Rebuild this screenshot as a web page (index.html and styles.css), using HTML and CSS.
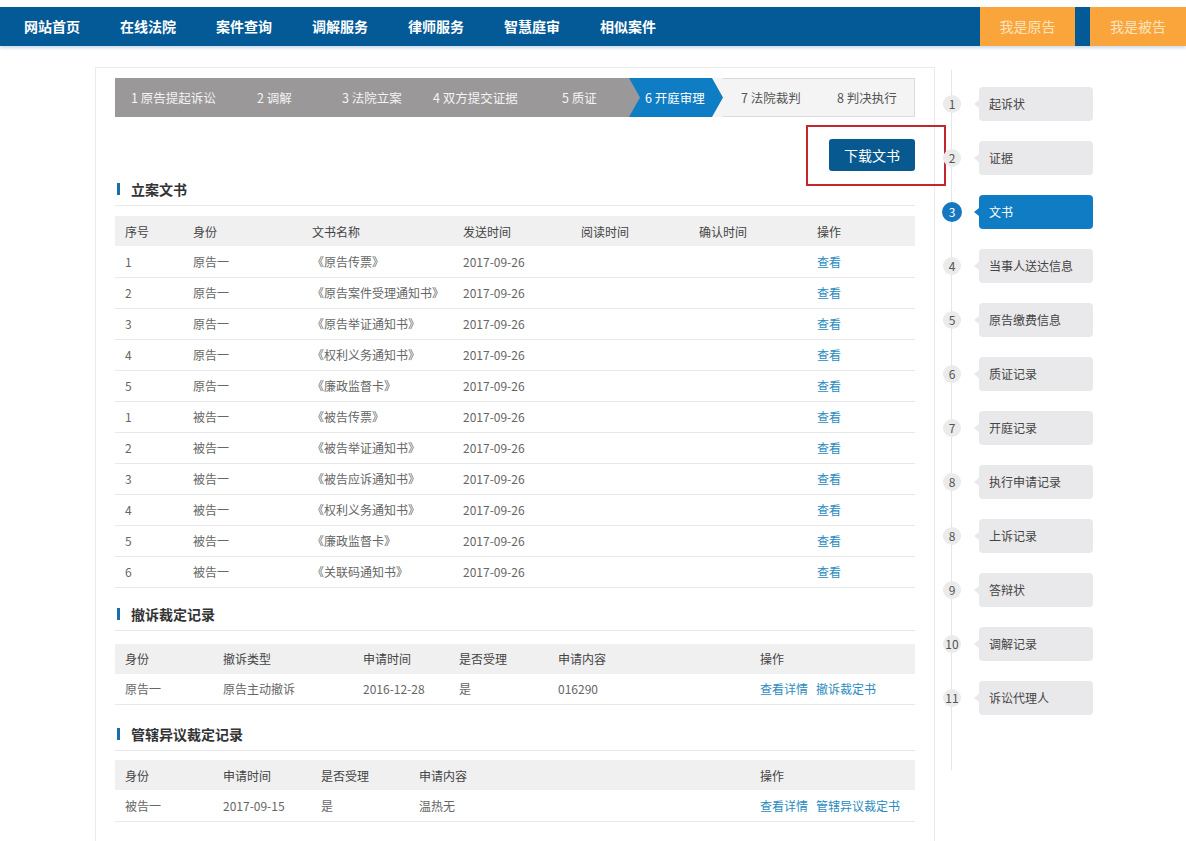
FILE: index.html
```html
<!DOCTYPE html>
<html lang="zh-CN">
<head>
<meta charset="utf-8">
<title>开庭审理</title>
<link rel="stylesheet" href="styles.css">
</head>
<body>
<header class="topnav">
  <ul class="menu">
    <li>网站首页</li>
    <li>在线法院</li>
    <li>案件查询</li>
    <li>调解服务</li>
    <li>律师服务</li>
    <li>智慧庭审</li>
    <li>相似案件</li>
  </ul>
  <div class="roles">
    <a class="role">我是原告</a>
    <a class="role role-2">我是被告</a>
  </div>
</header>

<div class="page">
  <main class="panel">
    <ol class="steps">
      <li class="step done s1">1 原告提起诉讼</li>
      <li class="step done s2">2 调解</li>
      <li class="step done s3">3 法院立案</li>
      <li class="step done s4">4 双方提交证据</li>
      <li class="step done s5">5 质证</li>
      <li class="step current s6"><span>6 开庭审理</span></li>
      <li class="step todo s7">7 法院裁判</li>
      <li class="step todo s8">8 判决执行</li>
    </ol>

    <div class="toolbar">
      <button class="btn-primary" type="button">下载文书</button>
      <span class="annot"></span>
    </div>

    <h3 class="sec-title">立案文书</h3>
    <table class="grid">
      <colgroup>
        <col class="d1"><col class="d2"><col class="d3"><col class="d4"><col class="d5"><col class="d6"><col class="d7">
      </colgroup>
      <thead>
        <tr><th>序号</th><th>身份</th><th>文书名称</th><th>发送时间</th><th>阅读时间</th><th>确认时间</th><th>操作</th></tr>
      </thead>
      <tbody>
        <tr><td>1</td><td>原告一</td><td>《原告传票》</td><td>2017-09-26</td><td></td><td></td><td><a class="link">查看</a></td></tr>
        <tr><td>2</td><td>原告一</td><td>《原告案件受理通知书》</td><td>2017-09-26</td><td></td><td></td><td><a class="link">查看</a></td></tr>
        <tr><td>3</td><td>原告一</td><td>《原告举证通知书》</td><td>2017-09-26</td><td></td><td></td><td><a class="link">查看</a></td></tr>
        <tr><td>4</td><td>原告一</td><td>《权利义务通知书》</td><td>2017-09-26</td><td></td><td></td><td><a class="link">查看</a></td></tr>
        <tr><td>5</td><td>原告一</td><td>《廉政监督卡》</td><td>2017-09-26</td><td></td><td></td><td><a class="link">查看</a></td></tr>
        <tr><td>1</td><td>被告一</td><td>《被告传票》</td><td>2017-09-26</td><td></td><td></td><td><a class="link">查看</a></td></tr>
        <tr><td>2</td><td>被告一</td><td>《被告举证通知书》</td><td>2017-09-26</td><td></td><td></td><td><a class="link">查看</a></td></tr>
        <tr><td>3</td><td>被告一</td><td>《被告应诉通知书》</td><td>2017-09-26</td><td></td><td></td><td><a class="link">查看</a></td></tr>
        <tr><td>4</td><td>被告一</td><td>《权利义务通知书》</td><td>2017-09-26</td><td></td><td></td><td><a class="link">查看</a></td></tr>
        <tr><td>5</td><td>被告一</td><td>《廉政监督卡》</td><td>2017-09-26</td><td></td><td></td><td><a class="link">查看</a></td></tr>
        <tr><td>6</td><td>被告一</td><td>《关联码通知书》</td><td>2017-09-26</td><td></td><td></td><td><a class="link">查看</a></td></tr>
      </tbody>
    </table>

    <h3 class="sec-title sec-next">撤诉裁定记录</h3>
    <table class="grid grid-wd">
      <colgroup>
        <col class="w1"><col class="w2"><col class="w3"><col class="w4"><col class="w5"><col class="w6">
      </colgroup>
      <thead>
        <tr><th>身份</th><th>撤诉类型</th><th>申请时间</th><th>是否受理</th><th>申请内容</th><th>操作</th></tr>
      </thead>
      <tbody>
        <tr><td>原告一</td><td>原告主动撤诉</td><td>2016-12-28</td><td>是</td><td>016290</td><td><a class="link">查看详情</a><a class="link">撤诉裁定书</a></td></tr>
      </tbody>
    </table>

    <h3 class="sec-title sec-last">管辖异议裁定记录</h3>
    <table class="grid grid-jd">
      <colgroup>
        <col class="j1"><col class="j2"><col class="j3"><col class="j4"><col class="j5">
      </colgroup>
      <thead>
        <tr><th>身份</th><th>申请时间</th><th>是否受理</th><th>申请内容</th><th>操作</th></tr>
      </thead>
      <tbody>
        <tr><td>被告一</td><td>2017-09-15</td><td>是</td><td>温热无</td><td><a class="link">查看详情</a><a class="link">管辖异议裁定书</a></td></tr>
      </tbody>
    </table>
  </main>

  <aside class="timeline">
    <ul class="tl-list">
      <li class="tl-item"><span class="tl-num">1</span><span class="tl-box">起诉状</span></li>
      <li class="tl-item"><span class="tl-num">2</span><span class="tl-box">证据</span></li>
      <li class="tl-item active"><span class="tl-num">3</span><span class="tl-box">文书</span></li>
      <li class="tl-item"><span class="tl-num">4</span><span class="tl-box">当事人送达信息</span></li>
      <li class="tl-item"><span class="tl-num">5</span><span class="tl-box">原告缴费信息</span></li>
      <li class="tl-item"><span class="tl-num">6</span><span class="tl-box">质证记录</span></li>
      <li class="tl-item"><span class="tl-num">7</span><span class="tl-box">开庭记录</span></li>
      <li class="tl-item"><span class="tl-num">8</span><span class="tl-box">执行申请记录</span></li>
      <li class="tl-item"><span class="tl-num">8</span><span class="tl-box">上诉记录</span></li>
      <li class="tl-item"><span class="tl-num">9</span><span class="tl-box">答辩状</span></li>
      <li class="tl-item"><span class="tl-num">10</span><span class="tl-box">调解记录</span></li>
      <li class="tl-item"><span class="tl-num">11</span><span class="tl-box">诉讼代理人</span></li>
    </ul>
  </aside>
</div>
</body>
</html>
```

FILE: styles.css
```css
* { box-sizing: border-box; }
html, body { margin: 0; padding: 0; background: #fff; }
body {
  font-family: "Noto Sans CJK SC", "Noto Sans", sans-serif;
  font-size: 12px;
  color: #666;
}

/* top navigation */
.topnav {
  margin-top: 7px;
  height: 39px;
  background: #045a97;
  display: flex;
  justify-content: space-between;
  box-shadow: 0 2px 3px rgba(40, 110, 170, 0.25);
}
.menu {
  list-style: none;
  margin: 0;
  padding: 0 0 0 24px;
  display: flex;
  gap: 40px;
}
.menu li {
  color: #fff;
  font-size: 14px;
  font-weight: bold;
  line-height: 39px;
}
.roles { display: flex; gap: 15px; }
.role {
  width: 95px;
  background: #f9a53b;
  color: #fde3bd;
  font-size: 14px;
  line-height: 39px;
  text-align: center;
}
.role-2 { width: 96px; }

/* layout */
.page {
  display: flex;
  margin-top: 21px;
  padding-left: 95px;
}
.panel {
  width: 840px;
  flex: none;
  border: 1px solid #ebebeb;
  border-bottom: 0;
  padding: 10px 19px 40px;
}

/* steps */
.steps {
  list-style: none;
  margin: 0;
  padding: 0;
  display: flex;
  height: 39px;
  background: #f4f4f4;
}
.step {
  padding-left: 16px;
  line-height: 39px;
  font-size: 12.5px;
  color: #fff;
  white-space: nowrap;
}
.done { background: #9a9899; color: #f4f4f4; }
.s1 { width: 126px; }
.s2 { width: 85px; }
.s3 { width: 91px; }
.s4 { width: 129px; }
.s5 { width: 83px; }
.s6 { width: 94px; }
.s7 { width: 98px; padding-left: 18px; }
.s8 { width: 94px; }
.current {
  position: relative;
  background: linear-gradient(to right, #9a9899 11px, transparent 11px);
}
.current::before {
  content: "";
  position: absolute;
  top: 0; left: 0; right: 0; bottom: 0;
  background: #0f7dc3;
  clip-path: polygon(0 0, calc(100% - 11px) 0, 100% 50%, calc(100% - 11px) 100%, 0 100%, 11px 50%);
}
.current span { position: relative; }
.todo {
  color: #555;
  border-top: 1px solid #dadada;
  border-bottom: 1px solid #dadada;
  line-height: 37px;
}
.s8 { border-right: 1px solid #dadada; }

/* toolbar */
.toolbar {
  position: relative;
  margin-top: 22px;
  height: 32px;
  display: flex;
  justify-content: flex-end;
}
.btn-primary {
  width: 86px;
  height: 32px;
  border: 0;
  border-radius: 3px;
  background: #07598f;
  color: #fff;
  font-family: inherit;
  font-size: 14px;
  padding: 0;
}
.annot {
  position: absolute;
  top: -14px;
  right: -31px;
  width: 140px;
  height: 61px;
  border: 2px solid #c1272d;
}

/* section titles */
.sec-title {
  position: relative;
  margin: 4px 0 0;
  height: 31px;
  line-height: 28px;
  padding-left: 16px;
  font-size: 14px;
  font-weight: bold;
  color: #333;
  border-bottom: 1px solid #e8e8e8;
}
.sec-title::before {
  content: "";
  position: absolute;
  left: 2px;
  top: 8px;
  width: 3px;
  height: 12px;
  background: #1b6ea6;
}
.sec-next { margin-top: 12px; }
.sec-last { margin-top: 15px; }

/* tables */
.grid {
  width: 100%;
  margin-top: 10px;
  border-collapse: collapse;
  table-layout: fixed;
}
.grid-wd { margin-top: 13px; }
.grid-jd { margin-top: 9px; }
.grid th {
  height: 30px;
  padding: 0 0 0 10px;
  background: #f0f0f0;
  color: #444;
  font-weight: normal;
  text-align: left;
}
.grid td {
  height: 31px;
  padding: 0 0 0 10px;
  border-bottom: 1px solid #e8e8e8;
  color: #666;
  white-space: nowrap;
}
.link {
  color: #2a8bc0;
  text-decoration: none;
  margin-right: 8px;
}
.d1 { width: 68px; }
.d2 { width: 119px; }
.d3 { width: 151px; }
.d4 { width: 118px; }
.d5 { width: 118px; }
.d6 { width: 118px; }
.d7 { width: 108px; }
.w1 { width: 98px; }
.w2 { width: 140px; }
.w3 { width: 96px; }
.w4 { width: 99px; }
.w5 { width: 202px; }
.w6 { width: 165px; }
.j1 { width: 98px; }
.j2 { width: 98px; }
.j3 { width: 98px; }
.j4 { width: 341px; }
.j5 { width: 165px; }

/* timeline sidebar */
.timeline {
  position: relative;
  width: 251px;
  flex: none;
  padding: 20px 0 0 8px;
}
.timeline::before {
  content: "";
  position: absolute;
  left: 16px;
  top: 3px;
  width: 1px;
  height: 700px;
  background: #e6e6e6;
}
.tl-list { list-style: none; margin: 0; padding: 0; }
.tl-item {
  display: flex;
  align-items: center;
  height: 34px;
  margin-bottom: 20px;
}
.tl-num {
  position: relative;
  width: 18px;
  height: 18px;
  margin-right: 18px;
  border-radius: 50%;
  background: #ebebeb;
  color: #555;
  font-size: 12px;
  line-height: 18px;
  text-align: center;
  flex: none;
}
.tl-box {
  position: relative;
  width: 114px;
  height: 34px;
  padding-left: 10px;
  border-radius: 4px;
  background: #e9e8ea;
  color: #444;
  line-height: 34px;
}
.tl-box::before {
  content: "";
  position: absolute;
  left: -5px;
  top: 13px;
  border-top: 4px solid transparent;
  border-bottom: 4px solid transparent;
  border-right: 5px solid #e9e8ea;
}
.active .tl-num {
  width: 20px;
  height: 20px;
  line-height: 20px;
  margin-left: -1px;
  margin-right: 17px;
  background: #1677c0;
  color: #fff;
}
.active .tl-box { background: #0f7cc4; color: #fff; }
.active .tl-box::before { border-right-color: #0f7cc4; }
```
